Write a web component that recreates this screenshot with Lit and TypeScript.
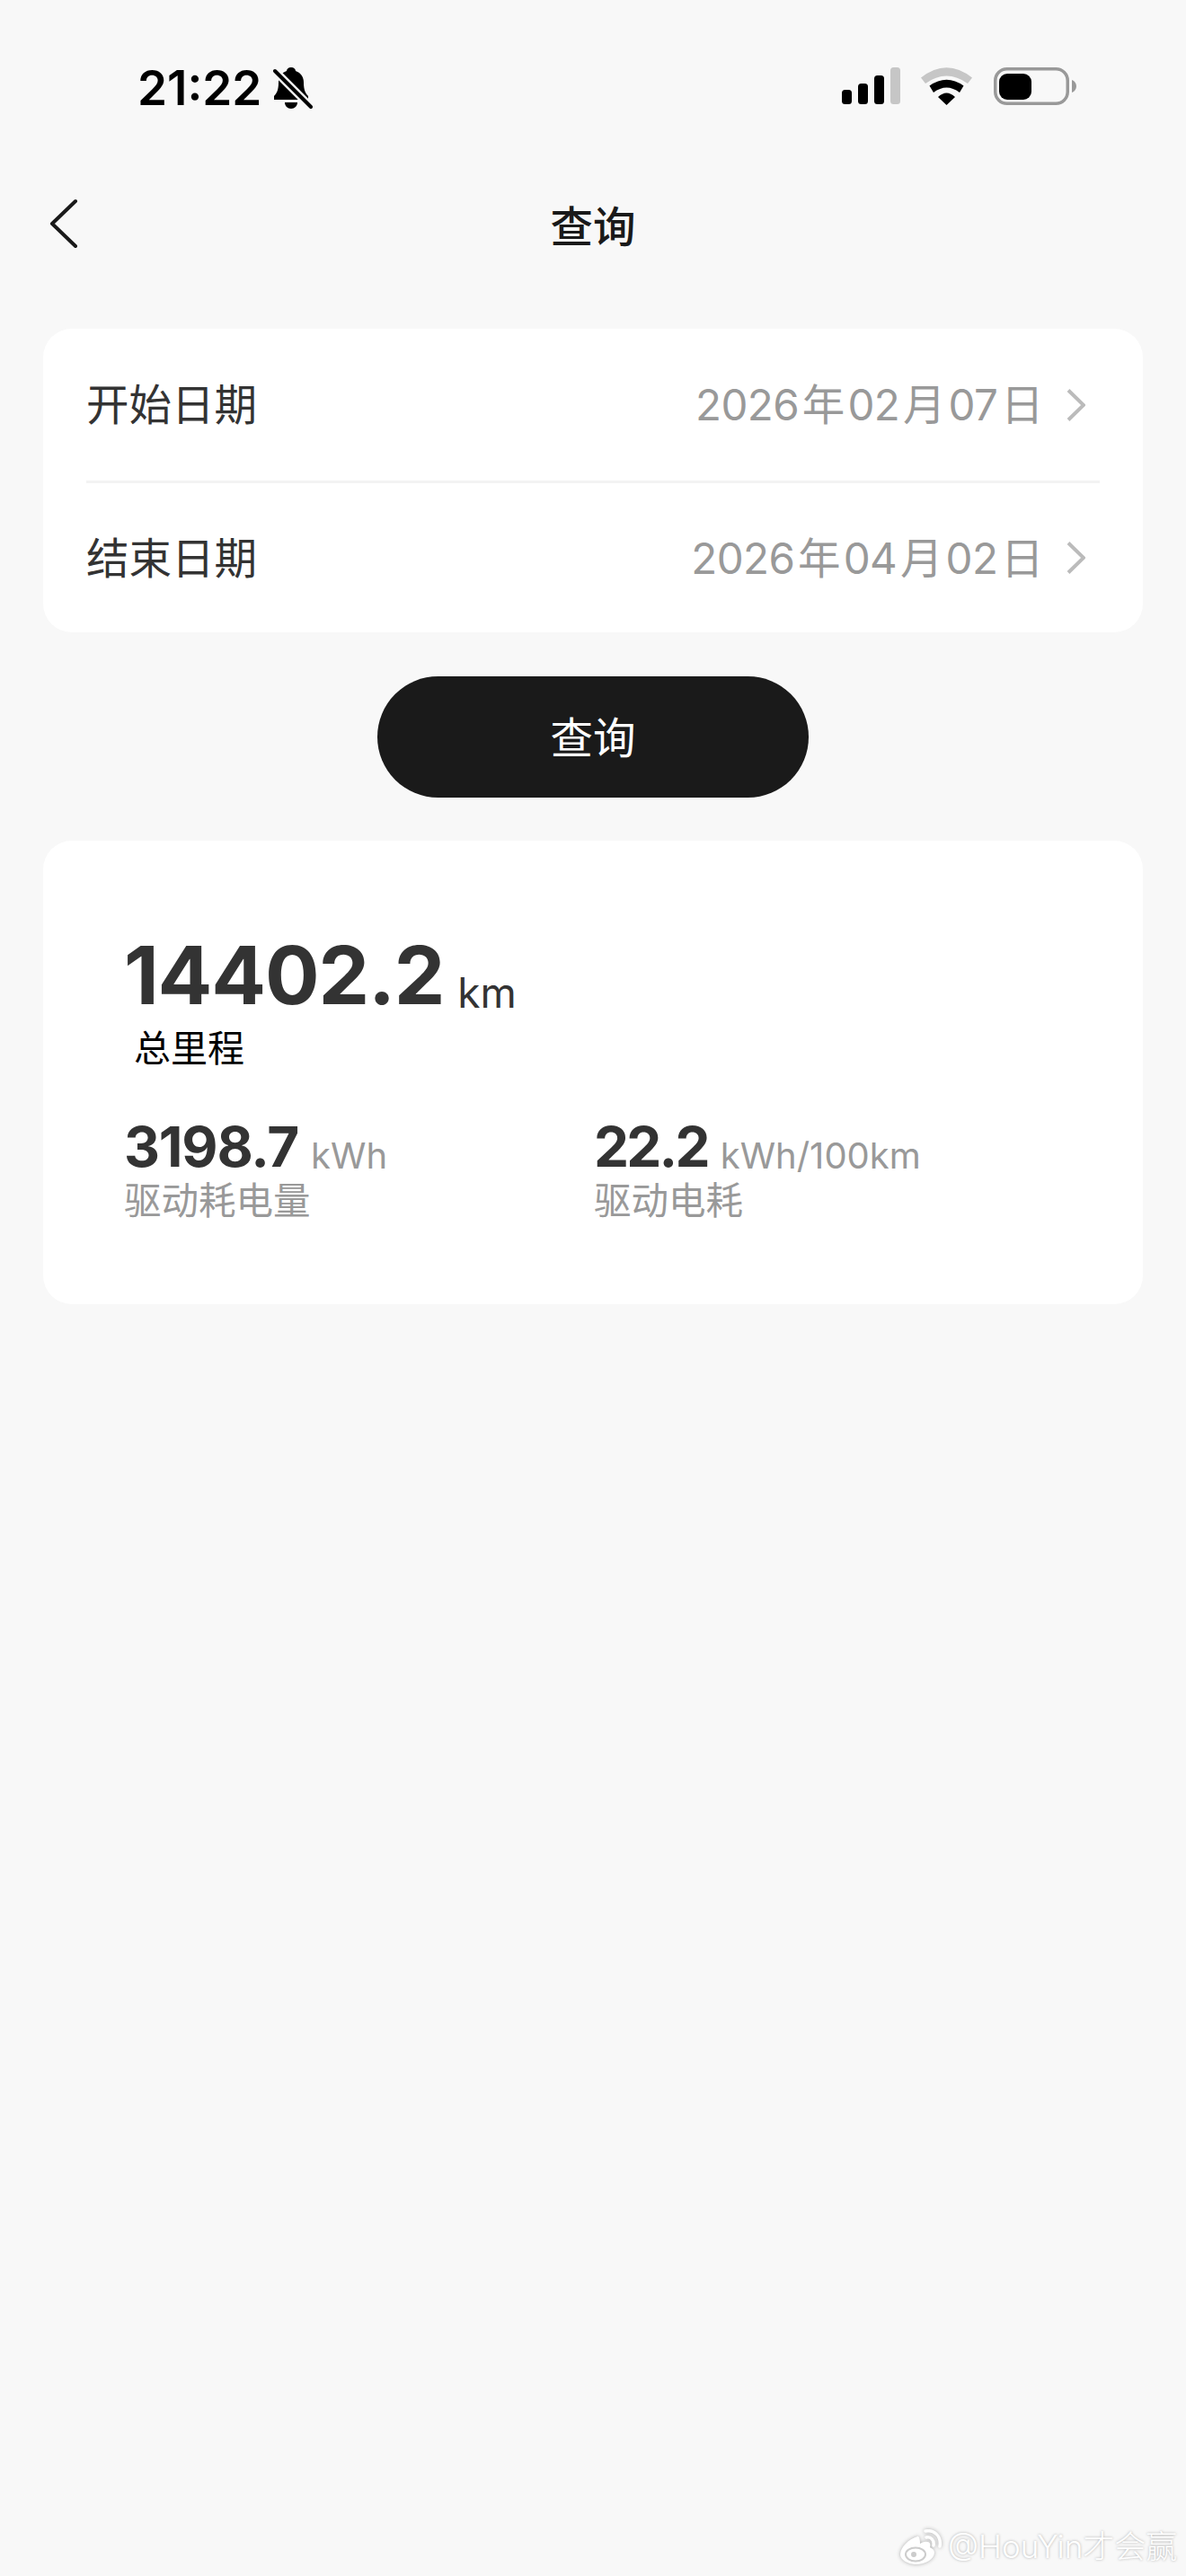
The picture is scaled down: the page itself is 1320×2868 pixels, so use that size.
import { LitElement, html, css } from "lit";
import { customElement } from "lit/decorators.js";

@customElement("app-root")
export class AppRoot extends LitElement {
  static styles = css`
    :host { display: block; width: 1320px; height: 2868px; background: #f8f8f8; font-family: Inter, "Noto Sans CJK SC", sans-serif; position: relative; overflow: hidden; }
    .status { height: 208px; display: flex; justify-content: space-between; align-items: flex-start; box-sizing: border-box; padding: 72px 122px 0 153px; }
    .time { display: flex; align-items: center; gap: 13px; font-size: 53px; line-height: 52px; font-weight: 600; color: #000; }
    .time svg, .sys svg { display: block; }
    .sys { display: flex; align-items: flex-start; gap: 23px; margin-top: 3px; }
    .batt { margin-left: 1px; }
    .nav { height: 88px; margin-bottom: 70px; box-sizing: border-box; padding-bottom: 6px; position: relative; display: flex; align-items: center; justify-content: center; font-size: 47.5px; color: #1a1a1a; font-weight: 500; }
    .back { position: absolute; left: 54px; top: 13px; }
    .card { background: #fff; border-radius: 32px; margin: 0 48px; }
    .dates { height: 338px; padding: 0 48px; }
    .row { height: 169px; display: flex; align-items: center; justify-content: space-between; font-size: 47.5px; color: #333; box-sizing: border-box; }
    .row + .row { border-top: 3px solid #f3f3f3; }
    .label { padding-bottom: 6px; }
    .val { display: flex; align-items: center; color: #999; gap: 26px; margin-right: 16px; }
    .date { word-spacing: -9px; letter-spacing: -0.6px; padding-bottom: 6px; }
    .val svg { display: block; }
    .btn { width: 480px; height: 135px; box-sizing: border-box; padding-bottom: 4px; margin: 49px auto 48px; border-radius: 68px; background: #1a1a1a; color: #fff; display: flex; align-items: center; justify-content: center; font-size: 47.5px; }
    .stats { height: 516px; box-sizing: border-box; padding: 104px 0 0 90px; }
    .big { font-size: 90px; line-height: 92px; font-weight: 700; color: #333; letter-spacing: -1.2px; white-space: nowrap; }
    .unit { font-weight: 400; letter-spacing: 0; line-height: 1; }
    .big .unit { font-size: 46px; margin-left: 15px; vertical-align: -4px; }
    .lbl { font-size: 41px; line-height: 48px; color: #000; margin: 11px 0 0 11px; }
    .cols { display: grid; grid-template-columns: 523px 1fr; margin-top: 55px; }
    .mid { font-size: 62px; line-height: 62px; font-weight: 700; color: #333; letter-spacing: -1.2px; white-space: nowrap; }
    .mid.tight { letter-spacing: -2.8px; }
    .mid .unit { color: #999; font-size: 40px; margin-left: 14px; vertical-align: -2px; }
    .sub { font-size: 41.5px; line-height: 48px; color: #999; margin-top: 5px; }
    .wm { position: absolute; left: 1002px; top: 2816px; display: flex; align-items: center; gap: 6px; font-size: 35px; line-height: 39px; font-weight: 300; color: #fff; text-shadow: 0 0 3px #aaa; white-space: nowrap; }
    .wm svg { display: block; filter: drop-shadow(0 0 2px #aaa); }
  `;
  chev() {
    return html`<svg width="21" height="36" viewBox="0 0 21 36"><path d="M2 1.5 L19 18 L2 34.5" fill="none" stroke="#bbb" stroke-width="4"/></svg>`;
  }
  render() {
    return html`
      <div class="status">
        <div class="time">21:22
          <svg width="44" height="48" viewBox="0 0 44 48"><path d="M20 1c3 0 5 2 5 4 6 2 9 7 9 13 0 8 2 12 5 15v4H1v-4c3-3 5-7 5-15 0-6 3-11 9-13 0-2 2-4 5-4zM13 40h14c0 4-3 7-7 7s-7-3-7-7z" fill="#000"/><path d="M0 3l44 44" stroke="#f8f8f8" stroke-width="9"/><path d="M2 5l40 40" stroke="#000" stroke-width="4" stroke-linecap="round"/></svg>
        </div>
        <div class="sys">
          <svg width="65" height="41" viewBox="0 0 65 41"><rect x="0" y="25" width="11" height="16" rx="3.5"/><rect x="18" y="18" width="11" height="23" rx="3.5"/><rect x="36" y="9" width="11" height="32" rx="3.5"/><rect x="54" y="0" width="11" height="41" rx="3.5" fill="#c6c6c6"/></svg>
          <svg width="57" height="42" viewBox="0 0 57 42"><path d="M0 11.5Q28.500 -11 57 11.500L52 18Q28.500 1 5 18Z" fill="#c6c6c6"/><path d="M9.500 20.500Q28.500 7 47.500 20.500L43 28Q28.500 17 14 28Z"/><path d="M19 33Q28.500 24 38 33L28.500 42Z"/></svg>
          <svg class="batt" width="92" height="42" viewBox="0 0 92 42"><rect x="1.750" y="1.750" width="80.500" height="38.500" rx="13" fill="none" stroke="#999" stroke-width="3.500"/><rect x="6" y="7" width="36" height="29" rx="9"/><path d="M87 14c3 1 5 4 5 7s-2 6-5 7z" fill="#999"/></svg>
        </div>
      </div>
      <div class="nav"><svg class="back" width="34" height="56" viewBox="0 0 34 56"><path d="M30 3 L4 28 L30 53" fill="none" stroke="#1a1a1a" stroke-width="4" stroke-linecap="round" stroke-linejoin="round"/></svg>查询</div>
      <div class="card dates">
        <div class="row"><span class="label">开始日期</span><span class="val"><span class="date">2026 年 02 月 07 日</span>${this.chev()}</span></div>
        <div class="row"><span class="label">结束日期</span><span class="val"><span class="date">2026 年 04 月 02 日</span>${this.chev()}</span></div>
      </div>
      <div class="btn">查询</div>
      <div class="card stats">
        <div class="big">14402.2<span class="unit">km</span></div>
        <div class="lbl">总里程</div>
        <div class="cols">
          <div><div class="mid">3198.7<span class="unit">kWh</span></div><div class="sub">驱动耗电量</div></div>
          <div><div class="mid tight">22.2<span class="unit">kWh/100km</span></div><div class="sub">驱动电耗</div></div>
        </div>
      </div>
      <div class="wm">
        <svg width="47" height="39" viewBox="0 0 47 39"><path d="M19 8C9 11 0 20 0 28c0 6 8 11 18 11s20-6 20-13c0-4-4-5-5-6 1-3 0-6-3-6-3-1-6 1-8 2 0-5-1-9-3-8z" fill="#fff"/><ellipse cx="17" cy="28" rx="11" ry="7.500" fill="none" stroke="#ccc" stroke-width="2"/><circle cx="15" cy="28" r="3" fill="#ccc"/><path d="M28 2C38 0 46 8 44 19M29 9c5-1 9 3 8 9" fill="none" stroke="#fff" stroke-width="3.500" stroke-linecap="round"/></svg>
        <span>@HouYin才会赢</span>
      </div>
    `;
  }
}
